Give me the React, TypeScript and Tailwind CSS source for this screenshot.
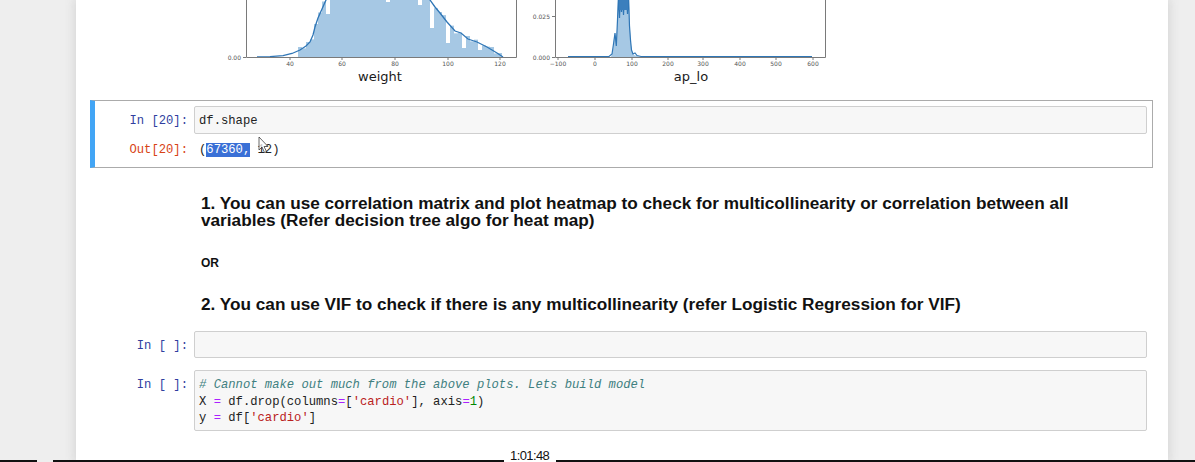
import React from 'react';

const mono = { fontFamily: '"Liberation Mono", "DejaVu Sans Mono", monospace' };

// weight kde, page coordinates (visible tails only)
const kdeLeft: [number, number][] = [
  [257, 57], [270, 56.6], [283, 55.6], [292, 53.5], [300, 50], [306, 46], [310, 42], [313, 35],
  [315, 27], [318, 18], [322, 9], [326, 0], [328, -10],
];
const kdeRight: [number, number][] = [
  [427, -10], [430, 0], [435, 7], [440, 13], [447, 22], [455, 31], [461, 33], [468, 39],
  [477, 42], [487, 47], [497, 53], [503, 57],
];

function kdeY(x: number) {
  const pts = x < 380 ? kdeLeft : kdeRight;
  if (x <= pts[0][0]) return x < 380 ? 57 : -10;
  for (let i = 1; i < pts.length; i++) {
    if (x <= pts[i][0]) {
      const [x0, y0] = pts[i - 1];
      const [x1, y1] = pts[i];
      return y0 + ((x - x0) / (x1 - x0)) * (y1 - y0);
    }
  }
  return x < 380 ? -10 : 57;
}

const shortBars: Record<number, number> = { 7: 14, 22: 2, 30: 5, 33: 28, 37: 43, 41: 48, 45: 50 };
const jitter = [-3, 1, -2, 2, 0, -1];

const weightBars = Array.from({ length: 51 }, (_, i) => {
  const x = 298 + i * 4;
  let top = kdeY(x + 2) + jitter[i % jitter.length];
  if (shortBars[i] !== undefined) top = shortBars[i];
  return { x, top: Math.min(top, 56) };
});

const toPath = (pts: [number, number][]) => pts.map((p, i) => `${i ? 'L' : 'M'}${p[0]},${p[1]}`).join(' ');

function Charts() {
  const axis = '#7a7a7a';
  const tick = '#555';
  return (
    <svg width="640" height="95" viewBox="194 0 640 95" className="block">
      {/* weight */}
      {weightBars.map((b) => (
        <rect key={b.x} x={b.x} y={b.top} width={4} height={57 - b.top} fill="#a6c8e4" />
      ))}
      <path d={toPath(kdeLeft)} fill="none" stroke="#2f76b6" strokeWidth={1.3} />
      <path d={toPath(kdeRight)} fill="none" stroke="#2f76b6" strokeWidth={1.3} />
      <path d="M246.5,0 V57.5 H516.5 V0" fill="none" stroke={axis} strokeWidth={1} />
      <line x1={243} y1={57.5} x2={246} y2={57.5} stroke={axis} />
      <text x={241} y={59.5} fontSize={6} fill={tick} textAnchor="end" fontFamily="DejaVu Sans">0.00</text>
      {[
        [290, '40'], [342, '60'], [395, '80'], [448, '100'], [500, '120'],
      ].map(([x, l]) => (
        <g key={l as string}>
          <line x1={x as number} y1={57.5} x2={x as number} y2={60} stroke={axis} />
          <text x={x as number} y={66} fontSize={6} fill={tick} textAnchor="middle" fontFamily="DejaVu Sans">{l}</text>
        </g>
      ))}
      <text x={380} y={81} fontSize={13} fill="#1a1a1a" textAnchor="middle" fontFamily="DejaVu Sans">weight</text>

      {/* ap_lo */}
      <path
        d="M611,57 L613,50 L614,38 L615,33 L616,40 L617,30 L618,0 L629,0 L630,30 L631,44 L632,52 L634,55 L637,56 L641,57 Z"
        fill="#a6c8e4"
      />
      <path
        d="M568,56.5 L609,56.5 L612,54 L613.5,44 L615,33 L616.3,46 L617.5,20 L618.5,-5 L619.5,18 L620.5,-5 L621.5,12 L622.5,-5 L623.5,15 L624.5,-5 L625.5,10 L626.5,-5 L627.5,14 L628.5,-5 L629.5,26 L630.5,40 L631.5,50 L633,54 L635,53 L637,55.5 L641,56.5 L812,56.5"
        fill="none"
        stroke="#2f76b6"
        strokeWidth={1.2}
      />
      <rect x={619} y={0} width={9} height={10} fill="#3b7fbd" />
      <path d="M555.5,0 V57.5 H825.5 V0" fill="none" stroke={axis} strokeWidth={1} />
      <line x1={552} y1={16.5} x2={555} y2={16.5} stroke={axis} />
      <line x1={552} y1={57.5} x2={555} y2={57.5} stroke={axis} />
      <text x={550} y={18.5} fontSize={6} fill={tick} textAnchor="end" fontFamily="DejaVu Sans">0.025</text>
      <text x={550} y={59.5} fontSize={6} fill={tick} textAnchor="end" fontFamily="DejaVu Sans">0.000</text>
      {[
        [558, '\u2212100'], [595, '0'], [632, '100'], [668, '200'], [703, '300'], [740, '400'], [776, '500'], [813, '600'],
      ].map(([x, l]) => (
        <g key={l as string}>
          <line x1={x as number} y1={57.5} x2={x as number} y2={60} stroke={axis} />
          <text x={x as number} y={66} fontSize={6} fill={tick} textAnchor="middle" fontFamily="DejaVu Sans">{l}</text>
        </g>
      ))}
      <text x={691} y={81} fontSize={13} fill="#1a1a1a" textAnchor="middle" fontFamily="DejaVu Sans">ap_lo</text>
    </svg>
  );
}

function Prompt({ children, out = false }: { children: React.ReactNode; out?: boolean }) {
  return (
    <div
      className={`w-[98px] shrink-0 pr-[6px] pt-[7px] text-right text-[12.2px] leading-[16.5px] ${out ? 'text-[#d84315]' : 'text-[#303f9f]'}`}
      style={mono}
    >
      {children}
    </div>
  );
}

function InputBox({ children }: { children?: React.ReactNode }) {
  return (
    <div
      className="flex-1 min-w-0 rounded-[2px] border border-[#cfcfcf] bg-[#f7f7f7] px-[4px] pt-[6px] pb-[3px] text-[12.2px] leading-[16.5px] text-[#222] whitespace-pre"
      style={mono}
    >
      {children ?? '\u00a0'}
    </div>
  );
}

export default function App() {
  return (
    <div className="relative h-[462px] w-[1195px] overflow-hidden bg-[#eeeeee]">
      <div className="ml-[76px] h-full w-[1092px] bg-white pl-[14px] pr-[15px] shadow-[0_0_10px_1px_rgba(87,87,87,0.18)]">
        {/* output of previous cell */}
        <div className="h-[100px] pl-[104px]">
          <Charts />
        </div>

        {/* selected cell */}
        <div className="border border-[#ababab] border-l-[5px] border-l-[#42a5f5] py-[5px] pl-[1px] pr-[5px]">
          <div className="flex">
            <Prompt>In&nbsp;[20]:</Prompt>
            <InputBox>df.shape</InputBox>
          </div>
          <div className="flex">
            <div
              className="w-[98px] shrink-0 pr-[6px] pt-[8px] text-right text-[12.2px] leading-[16px] text-[#d84315]"
              style={mono}
            >
              Out[20]:
            </div>
            <div className="pl-[5px] pt-[8px] pb-[4px] text-[12.2px] leading-[16px] text-[#222] whitespace-pre" style={mono}>
              (<span className="bg-[#3a70d6] text-white">67360,</span> 12)
            </div>
          </div>
        </div>

        {/* markdown cell */}
        <div className="flex border border-transparent p-[5px]">
          <div className="w-[98px] shrink-0" />
          <div
            className="flex-1 px-[7px] pb-[6px] font-bold text-[#111]"
            style={{ fontFamily: '"Liberation Sans", Arial, sans-serif' }}
          >
            <p className="mt-[21px] text-[17.2px] leading-[17px]">
              1. You can use correlation matrix and plot heatmap to check for multicollinearity or correlation between all variables (Refer decision tree algo for heat map)
            </p>
            <p className="mt-[27px] text-[12px] leading-[14px]">OR</p>
            <p className="mt-[26px] text-[17.2px] leading-[17px]">
              2. You can use VIF to check if there is any multicollinearity (refer Logistic Regression for VIF)
            </p>
          </div>
        </div>

        {/* empty cell */}
        <div className="flex border border-transparent p-[5px]">
          <Prompt>In&nbsp;[&nbsp;]:</Prompt>
          <InputBox />
        </div>

        {/* code cell */}
        <div className="flex border border-transparent p-[5px]">
          <Prompt>In&nbsp;[&nbsp;]:</Prompt>
          <InputBox>
            <span className="italic text-[#408080]"># Cannot make out much from the above plots. Lets build model</span>
            {'\n'}X <span className="text-[#aa22ff]">=</span> df.drop(columns<span className="text-[#aa22ff]">=</span>[<span className="text-[#ba2121]">'cardio'</span>], axis<span className="text-[#aa22ff]">=</span><span className="text-[#008800]">1</span>)
            {'\n'}y <span className="text-[#aa22ff]">=</span> df[<span className="text-[#ba2121]">'cardio'</span>]
          </InputBox>
        </div>
      </div>

      {/* mouse cursor */}
      <svg className="absolute left-[258px] top-[136px]" width="12" height="18" viewBox="0 0 12 18">
        <path d="M1,1 L1,14 L4,11 L6.5,16.5 L8.5,15.5 L6,10.5 L10,10.5 Z" fill="rgba(255,255,255,0.75)" stroke="rgba(40,40,40,0.7)" strokeWidth={1} />
      </svg>

      {/* video progress bar */}
      <div className="absolute bottom-0 left-0 flex h-[14px] w-full items-end">
        <div className="h-[2px] w-[37px] bg-[#111]" />
        <div className="w-[16px]" />
        <div className="h-[2px] w-[451px] bg-[#111]" />
        <div
          className="w-[52px] pl-[6px] text-[13px] leading-[13px] tracking-[-0.6px] text-[#111]"
          style={{ fontFamily: '"Liberation Sans", Arial, sans-serif' }}
        >
          1:01:48
        </div>
        <div className="h-[2px] flex-1 bg-[#111]" />
      </div>
    </div>
  );
}
